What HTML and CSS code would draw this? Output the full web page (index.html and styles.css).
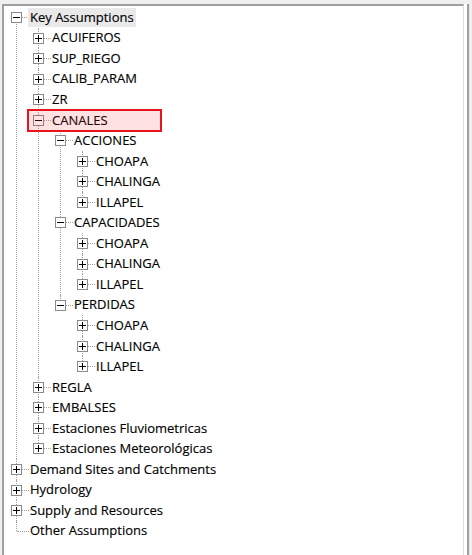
FILE: index.html
```html
<!DOCTYPE html>
<html>
<head>
<meta charset="utf-8">
<link rel="stylesheet" href="styles.css">
</head>
<body>
<div class="window">
  <div class="frame">
    <ul class="tree">
      <li class="first">
        <div class="row"><span class="exp minus"></span><span class="label selected">Key Assumptions</span></div>
        <ul>
          <li><div class="row"><span class="exp plus"></span><span class="label">ACUIFEROS</span></div></li>
          <li><div class="row"><span class="exp plus"></span><span class="label">SUP_RIEGO</span></div></li>
          <li><div class="row"><span class="exp plus"></span><span class="label">CALIB_PARAM</span></div></li>
          <li><div class="row"><span class="exp plus"></span><span class="label">ZR</span></div></li>
          <li>
            <div class="row"><span class="exp minus"></span><span class="label">CANALES</span><span class="mark"></span></div>
            <ul>
              <li>
                <div class="row"><span class="exp minus"></span><span class="label">ACCIONES</span></div>
                <ul>
                  <li><div class="row"><span class="exp plus"></span><span class="label">CHOAPA</span></div></li>
                  <li><div class="row"><span class="exp plus"></span><span class="label">CHALINGA</span></div></li>
                  <li class="last"><div class="row"><span class="exp plus"></span><span class="label">ILLAPEL</span></div></li>
                </ul>
              </li>
              <li>
                <div class="row"><span class="exp minus"></span><span class="label">CAPACIDADES</span></div>
                <ul>
                  <li><div class="row"><span class="exp plus"></span><span class="label">CHOAPA</span></div></li>
                  <li><div class="row"><span class="exp plus"></span><span class="label">CHALINGA</span></div></li>
                  <li class="last"><div class="row"><span class="exp plus"></span><span class="label">ILLAPEL</span></div></li>
                </ul>
              </li>
              <li class="last">
                <div class="row"><span class="exp minus"></span><span class="label">PERDIDAS</span></div>
                <ul>
                  <li><div class="row"><span class="exp plus"></span><span class="label">CHOAPA</span></div></li>
                  <li><div class="row"><span class="exp plus"></span><span class="label">CHALINGA</span></div></li>
                  <li class="last"><div class="row"><span class="exp plus"></span><span class="label">ILLAPEL</span></div></li>
                </ul>
              </li>
            </ul>
          </li>
          <li><div class="row"><span class="exp plus"></span><span class="label">REGLA</span></div></li>
          <li><div class="row"><span class="exp plus"></span><span class="label">EMBALSES</span></div></li>
          <li><div class="row"><span class="exp plus"></span><span class="label">Estaciones Fluviometricas</span></div></li>
          <li class="last"><div class="row"><span class="exp plus"></span><span class="label">Estaciones Meteorológicas</span></div></li>
        </ul>
      </li>
      <li><div class="row"><span class="exp plus"></span><span class="label">Demand Sites and Catchments</span></div></li>
      <li><div class="row"><span class="exp plus"></span><span class="label">Hydrology</span></div></li>
      <li><div class="row"><span class="exp plus"></span><span class="label">Supply and Resources</span></div></li>
      <li class="last"><div class="row"><span class="label">Other Assumptions</span></div></li>
    </ul>
  </div>
  <div class="edge"></div>
</div>
</body>
</html>
```

FILE: styles.css
```css
html, body {
  margin: 0;
  padding: 0;
  background: #f0f0f0;
}

body {
  width: 472px;
  height: 555px;
  overflow: hidden;
  font-family: "Open Sans", "Noto Sans", sans-serif;
  font-size: 13px;
  color: #000;
}

.window {
  display: flex;
  height: 555px;
  padding: 4px 0 0 2px;
  box-sizing: border-box;
}

.frame {
  width: 462px;
  height: 551px;
  box-sizing: border-box;
  background: #fff;
  border-top: 2px solid #a0a0a0;
  border-left: 2px solid #a0a0a0;
  border-right: 1px solid #dedede;
  padding-top: 1px;
}

.edge {
  width: 6px;
  height: 551px;
  box-sizing: border-box;
  background: #fff;
  border-left: 3px solid #fff;
  border-right: 1px solid #e6e6e6;
  position: relative;
}

.edge::after {
  content: "";
  position: absolute;
  left: 0;
  top: 0;
  bottom: 0;
  width: 2px;
  background: #a0a0a0;
}

.tree,
.tree ul {
  list-style: none;
  margin: 0;
  padding: 0;
}

.tree ul {
  padding-left: 22px;
}

.tree li {
  position: relative;
}

.tree li::before {
  content: "";
  position: absolute;
  left: 12px;
  top: 0;
  bottom: 0;
  border-left: 1px dotted #a0a0a0;
}

.tree li.last::before {
  bottom: auto;
  height: 10.5px;
}

.tree li.first::before {
  top: 10px;
}

.tree li::after {
  content: "";
  position: absolute;
  left: 13px;
  top: 10px;
  width: 12px;
  border-top: 1px dotted #a0a0a0;
}

.row {
  position: relative;
  height: 20.56px;
  display: flex;
  align-items: center;
  padding-left: 26px;
  z-index: 1;
}

.label {
  display: block;
  height: 19px;
  line-height: 19px;
  padding: 0 2px;
  margin-left: -2px;
  white-space: nowrap;
  color: #000;
  -webkit-text-stroke: 0.15px #000;
}

.label.selected {
  background: #e9e9e9;
}

.exp {
  position: absolute;
  left: 7px;
  top: 5px;
  width: 11px;
  height: 11px;
  box-sizing: border-box;
  border: 1px solid #8a8a8a;
  background: #fff;
}

.exp::before,
.exp::after {
  content: "";
  position: absolute;
  background: #000;
}

.exp::before {
  left: 1px;
  top: 4px;
  width: 7px;
  height: 1px;
}

.plus::after {
  left: 4px;
  top: 1px;
  width: 1px;
  height: 7px;
}

.minus::after {
  display: none;
}

.mark {
  position: absolute;
  left: 1px;
  top: -1px;
  width: 135px;
  height: 23px;
  box-sizing: border-box;
  border: 2px solid #e8141c;
  background: rgba(245, 60, 60, 0.15);
}
```
